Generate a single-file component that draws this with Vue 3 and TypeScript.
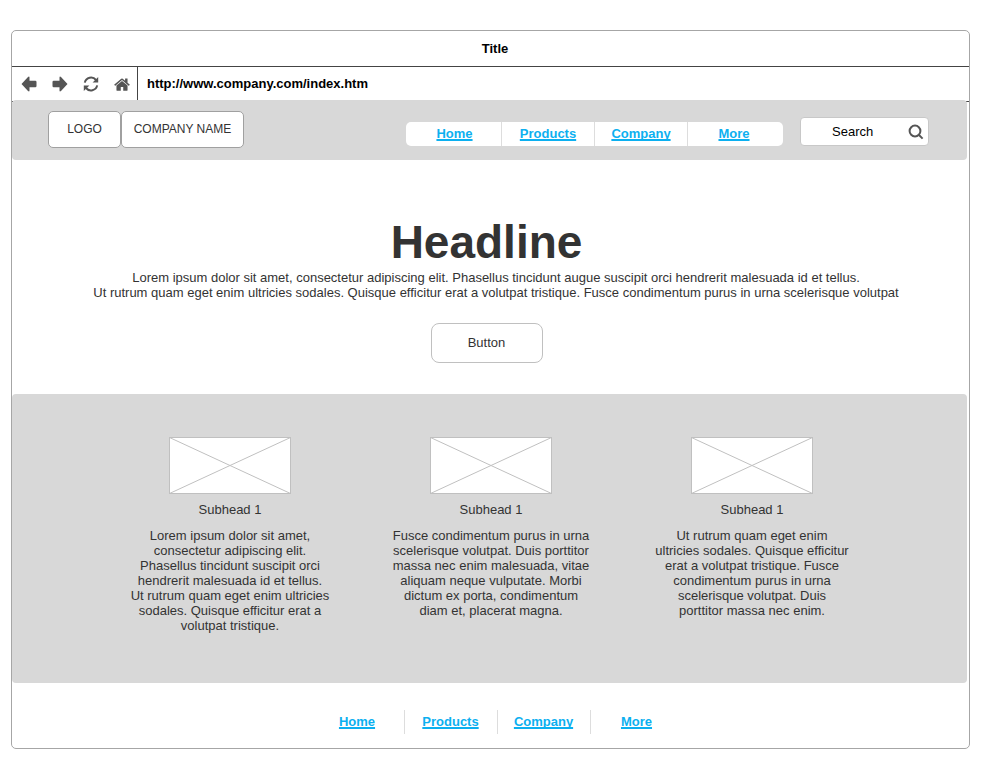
<script setup lang="ts">
import { ref } from 'vue'

interface Feature {
  title: string
  text: string
}

const address = ref('http://www.company.com/index.htm')
const query = ref('')
const links: string[] = ['Home', 'Products', 'Company', 'More']
const intro =
  'Lorem ipsum dolor sit amet, consectetur adipiscing elit. Phasellus tincidunt augue suscipit orci hendrerit malesuada id et tellus.\n' +
  'Ut rutrum quam eget enim ultricies sodales. Quisque efficitur erat a volutpat tristique. Fusce condimentum purus in urna scelerisque volutpat'

const features: Feature[] = [
  {
    title: 'Subhead 1',
    text: 'Lorem ipsum dolor sit amet,\nconsectetur adipiscing elit.\nPhasellus tincidunt suscipit orci\nhendrerit malesuada id et tellus.\nUt rutrum quam eget enim ultricies\nsodales. Quisque efficitur erat a\nvolutpat tristique.',
  },
  {
    title: 'Subhead 1',
    text: 'Fusce condimentum purus in urna\nscelerisque volutpat. Duis porttitor\nmassa nec enim malesuada, vitae\naliquam neque vulputate. Morbi\ndictum ex porta, condimentum\ndiam et, placerat magna.',
  },
  {
    title: 'Subhead 1',
    text: 'Ut rutrum quam eget enim\nultricies sodales. Quisque efficitur\nerat a volutpat tristique. Fusce\ncondimentum purus in urna\nscelerisque volutpat. Duis\nporttitor massa nec enim.',
  },
]
</script>

<template>
  <div class="page">
    <div class="window">
      <div class="titlebar">Title</div>
      <div class="toolbar">
        <div class="tools">
          <button type="button" aria-label="Back">
            <svg viewBox="0 0 16 16"><path d="M.5 8 7 .9Q8.5-.2 8.5 1.6v3.2h5.8q1.2 0 1.2 1.2v4q0 1.2-1.2 1.2H8.5v3.2q0 1.8-1.5.7z" /></svg>
          </button>
          <button type="button" aria-label="Forward">
            <svg viewBox="0 0 16 16"><path d="M15.5 8 9 .9Q7.5-.2 7.5 1.6v3.2H1.7Q.5 4.800.5 6v4q0 1.200 1.200 1.200h5.800v3.200q0 1.800 1.500.7z" /></svg>
          </button>
          <button type="button" aria-label="Reload">
            <svg viewBox="0 0 16 16">
              <path class="stroke" d="M1.800 6.600A6.400 6.400 0 0 1 13 4M14.200 9.400A6.400 6.400 0 0 1 3 12" />
              <path d="M15.200 1v5.600H9.600zM.8 15V9.400h5.600z" />
            </svg>
          </button>
          <button type="button" aria-label="Start page">
            <svg viewBox="0 0 1664 1664"><path d="M1408 992v480q0 26-19 45t-45 19h-384v-384h-256v384h-384q-26 0-45-19t-19-45v-480q0-1 .5-3t.5-3l575-474 575 474q1 2 1 6zm223-69l-62 74q-8 9-21 11h-3q-13 0-21-7l-692-577-692 577q-12 8-24 7-13-2-21-11l-62-74q-8-10-7-23.5t11-21.5l719-599q32-26 76-26t76 26l244 204v-195q0-14 9-23t23-9h192q14 0 23 9t9 23v408l219 182q10 8 11 21.5t-7 23.5z" /></svg>
          </button>
        </div>
        <input v-model="address" class="address" type="text" aria-label="Address" />
      </div>

      <header class="header">
        <div class="brand">
          <button type="button" class="logo">LOGO</button>
          <button type="button" class="company">COMPANY NAME</button>
        </div>
        <nav class="links boxed" aria-label="Main">
          <a v-for="link in links" :key="link" href="#">{{ link }}</a>
        </nav>
        <form class="search" role="search" @submit.prevent>
          <input v-model="query" type="text" placeholder="Search" aria-label="Search" />
          <button type="submit" aria-label="Submit search">
            <svg viewBox="0 0 16 16"><circle cx="7" cy="7" r="5.4" /><path d="m11 11 3.600 3.600" /></svg>
          </button>
        </form>
      </header>

      <section class="hero">
        <h1>Headline</h1>
        <p>{{ intro }}</p>
        <button type="button">Button</button>
      </section>

      <section class="features">
        <div class="columns">
          <article v-for="(feature, i) in features" :key="i">
            <svg class="picture" viewBox="0 0 122 57" aria-hidden="true">
              <rect x=".5" y=".5" width="121" height="56" />
              <path d="m.5.5 121 56M.5 56.500l121-56" />
            </svg>
            <h2>{{ feature.title }}</h2>
            <p>{{ feature.text }}</p>
          </article>
        </div>
      </section>

      <footer class="footer">
        <nav class="links" aria-label="Footer">
          <a v-for="link in links" :key="link" href="#">{{ link }}</a>
        </nav>
      </footer>
    </div>
  </div>
</template>

<style>
body {
  background: #fff;
}
</style>

<style scoped>
* {
  box-sizing: border-box;
}

.page {
  padding: 30px 30px 11px 11px;
  color: #333;
  font: 13px/15px "Liberation Sans", Arial, sans-serif;
}

button,
input {
  margin: 0;
  padding: 0;
  border: 0;
  background: none;
  color: inherit;
  font: inherit;
}

h1,
h2,
p {
  margin: 0;
}

.window {
  border: 1px solid #a6a6a6;
  border-radius: 5px;
}

.titlebar {
  padding: 10px 0 10px 9px;
  border-bottom: 1px solid #444;
  color: #000;
  font-weight: bold;
  text-align: center;
}

.toolbar {
  display: flex;
  height: 35px;
  border-bottom: 1px solid #444;
}

.tools {
  display: flex;
  align-items: center;
  gap: 15px;
  padding: 0 7px 0 9px;
  border-right: 1px solid #444;
}

.tools button,
.tools svg {
  display: block;
  width: 16px;
  height: 16px;
  fill: #555;
}

.tools .stroke {
  fill: none;
  stroke: #555;
  stroke-width: 2;
}

.address {
  flex: 1;
  min-width: 0;
  padding: 0 0 2px 9px;
  color: #000;
  font-weight: bold;
}

.header {
  position: relative;
  display: flex;
  align-items: center;
  height: 60px;
  margin: -2px 2px 0 0;
  padding: 0 38px 0 36px;
  border-radius: 4px;
  background: #d8d8d8;
}

.brand {
  display: flex;
  margin: 0 auto 2px 0;
}

.brand button {
  height: 37px;
  border: 1px solid #a0a0a0;
  border-radius: 5px;
  background: #fff;
  font-size: 12px;
}

.brand .logo {
  width: 73px;
}

.brand .company {
  width: 123px;
}

.links {
  display: flex;
  height: 24px;
  padding: 0 3px 0 2px;
  line-height: 24px;
}

.links a {
  width: 93px;
  color: #0cb0f0;
  font-weight: bold;
  text-align: center;
  text-decoration: underline;
  text-decoration-thickness: 2px;
  text-decoration-skip-ink: none;
}

.links a + a {
  border-left: 1px solid #ddd;
}

.boxed {
  margin: 7px 17px 0 0;
  border-radius: 5px;
  background: #fff;
}

.search {
  display: flex;
  align-items: center;
  width: 129px;
  height: 29px;
  margin-top: 3px;
  padding-right: 4px;
  border: 1px solid #c8c8c8;
  border-radius: 4px;
  background: #fff;
}

.search input {
  flex: 1;
  min-width: 0;
  padding-left: 31px;
  color: #000;
}

.search input::placeholder {
  color: #000;
  opacity: 1;
}

.search button,
.search svg {
  display: block;
  width: 16px;
  height: 16px;
  fill: none;
  stroke: #555;
  stroke-width: 2;
}

.hero {
  display: flex;
  flex-direction: column;
  align-items: center;
  padding: 54px 8px 31px 0;
}

.hero h1 {
  font-size: 46px;
  line-height: 56px;
}

.hero p {
  padding-left: 19px;
  text-align: center;
  white-space: pre-line;
}

.hero button {
  width: 112px;
  height: 40px;
  margin-top: 23px;
  padding-bottom: 2px;
  border: 1px solid #c0c0c0;
  border-radius: 8px;
}

.features {
  margin-right: 2px;
  padding: 43px 0 50px 3px;
  border-radius: 4px;
  background: #d8d8d8;
}

.columns {
  display: grid;
  grid-template-columns: repeat(3, 1fr);
  max-width: 783px;
  margin: 0 auto;
  text-align: center;
}

.picture {
  display: block;
  width: 122px;
  height: 57px;
  margin: 0 auto;
  fill: #fff;
  stroke: #c0c0c0;
}

.columns h2 {
  margin: 8px 0 11px;
  font-size: 13px;
  font-weight: normal;
}

.columns p {
  white-space: pre-line;
}

.footer {
  display: flex;
  justify-content: center;
  padding: 27px 0 14px 13px;
}
</style>
